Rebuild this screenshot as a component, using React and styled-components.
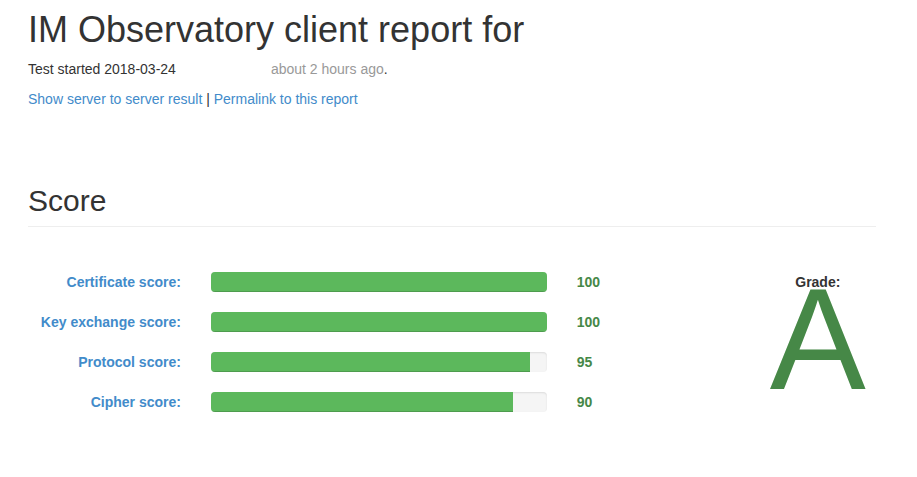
import React from 'react';
import styled, { createGlobalStyle } from 'styled-components';

const GlobalStyle = createGlobalStyle`
  *, *::before, *::after { box-sizing: border-box; }
  body {
    margin: 0;
    background: #fff;
    color: #333;
    font-family: "Helvetica Neue", Helvetica, Arial, "Liberation Sans", sans-serif;
    font-size: 14px;
    line-height: 20px;
  }
`;

const Page = styled.main`
  padding: 10px 41px 40px 28px;
`;

const Title = styled.h1`
  margin: 0 0 10px;
  font-size: 36px;
  font-weight: normal;
  line-height: 39px;
`;

const Paragraph = styled.p`
  margin: 0 0 10px;
`;

const Elapsed = styled.time`
  margin-left: 95px;
  color: #999;
`;

const Link = styled.a`
  color: #428bca;
  text-decoration: none;
  &:hover { color: #2a6496; text-decoration: underline; }
`;

const SectionTitle = styled.h2`
  margin: 75px 0 45px;
  padding-bottom: 9px;
  border-bottom: 1px solid #eee;
  font-size: 30px;
  font-weight: normal;
  line-height: 33px;
`;

const Report = styled.section`
  display: grid;
  grid-template-columns: 5fr 1fr;
  margin: 0 -15px;
`;

const ScoreList = styled.div`
  display: grid;
  gap: 20px;
  align-content: start;
`;

const ScoreRow = styled.div`
  display: grid;
  grid-template-columns: 1fr 2fr 1fr;
  font-weight: bold;
  & > * { margin: 0 15px; }
`;

const ScoreLabel = styled(Link)`
  text-align: right;
`;

const Track = styled.div`
  height: 20px;
  overflow: hidden;
  border-radius: 4px;
  background: #f5f5f5;
  box-shadow: inset 0 1px 2px rgba(0, 0, 0, 0.1);
`;

const Fill = styled.div`
  height: 100%;
  background: #5cb85c;
  box-shadow: inset 0 -1px 0 rgba(0, 0, 0, 0.15);
`;

const Value = styled.span`
  color: #468847;
`;

const Grade = styled.div`
  padding: 0 15px;
  text-align: center;
`;

const GradeLabel = styled.strong`
  display: block;
`;

const GradeLetter = styled.span`
  display: block;
  color: #468847;
  font-size: 144px;
  line-height: 96px;
`;

const scores = [
  { id: 'certificate', label: 'Certificate score:', value: 100 },
  { id: 'key-exchange', label: 'Key exchange score:', value: 100 },
  { id: 'protocol', label: 'Protocol score:', value: 95 },
  { id: 'cipher', label: 'Cipher score:', value: 90 },
];

export default function App() {
  return (
    <>
      <GlobalStyle />
      <Page>
        <Title>IM Observatory client report for</Title>
        <Paragraph>
          Test started 2018-03-24<Elapsed dateTime="2018-03-24">about 2 hours ago</Elapsed>.
        </Paragraph>
        <Paragraph>
          <Link href="#server">Show server to server result</Link> |{' '}
          <Link href="#permalink">Permalink to this report</Link>
        </Paragraph>
        <SectionTitle>Score</SectionTitle>
        <Report>
          <ScoreList>
            {scores.map(({ id, label, value }) => (
              <ScoreRow key={id}>
                <ScoreLabel id={id} href={`#${id}`}>{label}</ScoreLabel>
                <Track
                  role="progressbar"
                  aria-labelledby={id}
                  aria-valuenow={value}
                  aria-valuemin={0}
                  aria-valuemax={100}
                >
                  <Fill style={{ width: `${value}%` }} />
                </Track>
                <Value>{value}</Value>
              </ScoreRow>
            ))}
          </ScoreList>
          <Grade>
            <GradeLabel>Grade:</GradeLabel>
            <GradeLetter>A</GradeLetter>
          </Grade>
        </Report>
      </Page>
    </>
  );
}
